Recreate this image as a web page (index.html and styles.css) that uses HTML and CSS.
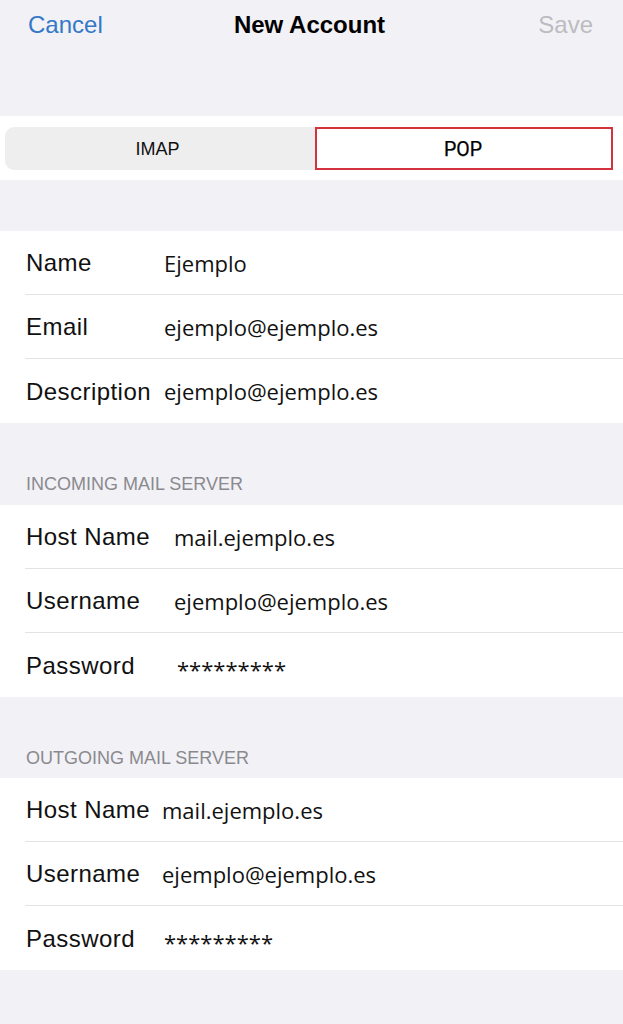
FILE: index.html
```html
<!DOCTYPE html>
<html lang="en">
<head>
<meta charset="utf-8">
<title>New Account</title>
<link rel="stylesheet" href="styles.css">
</head>
<body>
<div class="screen">
  <header class="nav">
    <span class="nav-btn cancel">Cancel</span>
    <span class="nav-title">New Account</span>
    <span class="nav-btn save">Save</span>
  </header>

  <div class="seg-band">
    <div class="segmented">
      <div class="seg seg-off">IMAP</div>
      <div class="seg seg-on">POP</div>
    </div>
  </div>

  <div class="gap gap-top"></div>

  <section class="group sec-basic">
    <div class="row"><span class="label">Name</span><span class="value">Ejemplo</span></div>
    <div class="row"><span class="label">Email</span><span class="value">ejemplo@ejemplo.es</span></div>
    <div class="row"><span class="label">Description</span><span class="value">ejemplo@ejemplo.es</span></div>
  </section>

  <div class="gap gap-header"><span class="group-title">INCOMING MAIL SERVER</span></div>

  <section class="group sec-in">
    <div class="row"><span class="label">Host Name</span><span class="value">mail.ejemplo.es</span></div>
    <div class="row"><span class="label">Username</span><span class="value">ejemplo@ejemplo.es</span></div>
    <div class="row"><span class="label">Password</span><span class="value pw pw-in">*********</span></div>
  </section>

  <div class="gap gap-header gap-out"><span class="group-title">OUTGOING MAIL SERVER</span></div>

  <section class="group sec-out">
    <div class="row"><span class="label">Host Name</span><span class="value">mail.ejemplo.es</span></div>
    <div class="row"><span class="label">Username</span><span class="value">ejemplo@ejemplo.es</span></div>
    <div class="row"><span class="label">Password</span><span class="value pw">*********</span></div>
  </section>
</div>
</body>
</html>
```

FILE: styles.css
```css
* { box-sizing: border-box; }

html, body {
  margin: 0;
  padding: 0;
  background: #f2f1f6;
}

body {
  font-family: "Liberation Sans", Arial, sans-serif;
  color: #111;
}

.screen {
  width: 623px;
  min-height: 1024px;
  background: #f2f1f6;
}

/* Navigation bar */
.nav {
  height: 116px;
  padding: 11px 30px 0 28px;
  display: flex;
  justify-content: space-between;
  align-items: flex-start;
  font-size: 24px;
  line-height: 28px;
}

.nav-btn { width: 80px; }
.cancel { color: #3478c6; }
.save { color: #bcbcc0; text-align: right; }
.nav-title {
  font-weight: bold;
  color: #000;
  margin-left: -2px;
}

/* Segmented control */
.seg-band {
  height: 64px;
  background: #fff;
  padding: 11px 10px 0 5px;
}

.segmented {
  display: flex;
  height: 43px;
}

.seg {
  flex: 1;
  display: flex;
  align-items: center;
  justify-content: center;
  font-size: 18px;
  color: #111;
  padding-top: 2px;
}

.seg-off {
  background: #eeeeef;
  border-radius: 9px 0 0 9px;
  padding-right: 5px;
  flex: 0 0 310px;
}

.seg-on {
  background: #fff;
  border: 2px solid #d4323c;
  font-family: Roboto, "Liberation Sans", sans-serif;
  font-weight: 400;
  font-size: 19.5px;
  color: #000;
  -webkit-text-stroke: 0.25px #000;
  padding-right: 2px;
}

/* Gaps and headers */
.gap-top { height: 51px; }

.gap-header {
  height: 82px;
  display: flex;
  align-items: flex-end;
  padding: 0 0 11px 26px;
}

.gap-out {
  height: 81px;
  padding-bottom: 10px;
}

.group-title {
  font-size: 18px;
  line-height: 20px;
  color: #8a8a8e;
}

/* Grouped rows */
.group {
  background: #fff;
}

.row {
  margin-left: 25px;
  height: 64px;
  display: flex;
  align-items: center;
  border-bottom: 1px solid #e3e3e7;
}

.row:last-child { border-bottom: none; }

.label {
  flex: 0 0 auto;
  padding-left: 1px;
  font-size: 24px;
  letter-spacing: 0.45px;
  color: #111;
  padding-top: 1px;
}

.sec-basic .label { width: 139px; }
.sec-in .label { width: 149px; }
.sec-out .label { width: 137px; }

.value {
  font-family: "Open Sans", "Liberation Sans", sans-serif;
  font-size: 22px;
  color: #111;
}

.pw { padding-left: 2px; padding-top: 7px; }
.pw-in { padding-left: 3px; }
```
